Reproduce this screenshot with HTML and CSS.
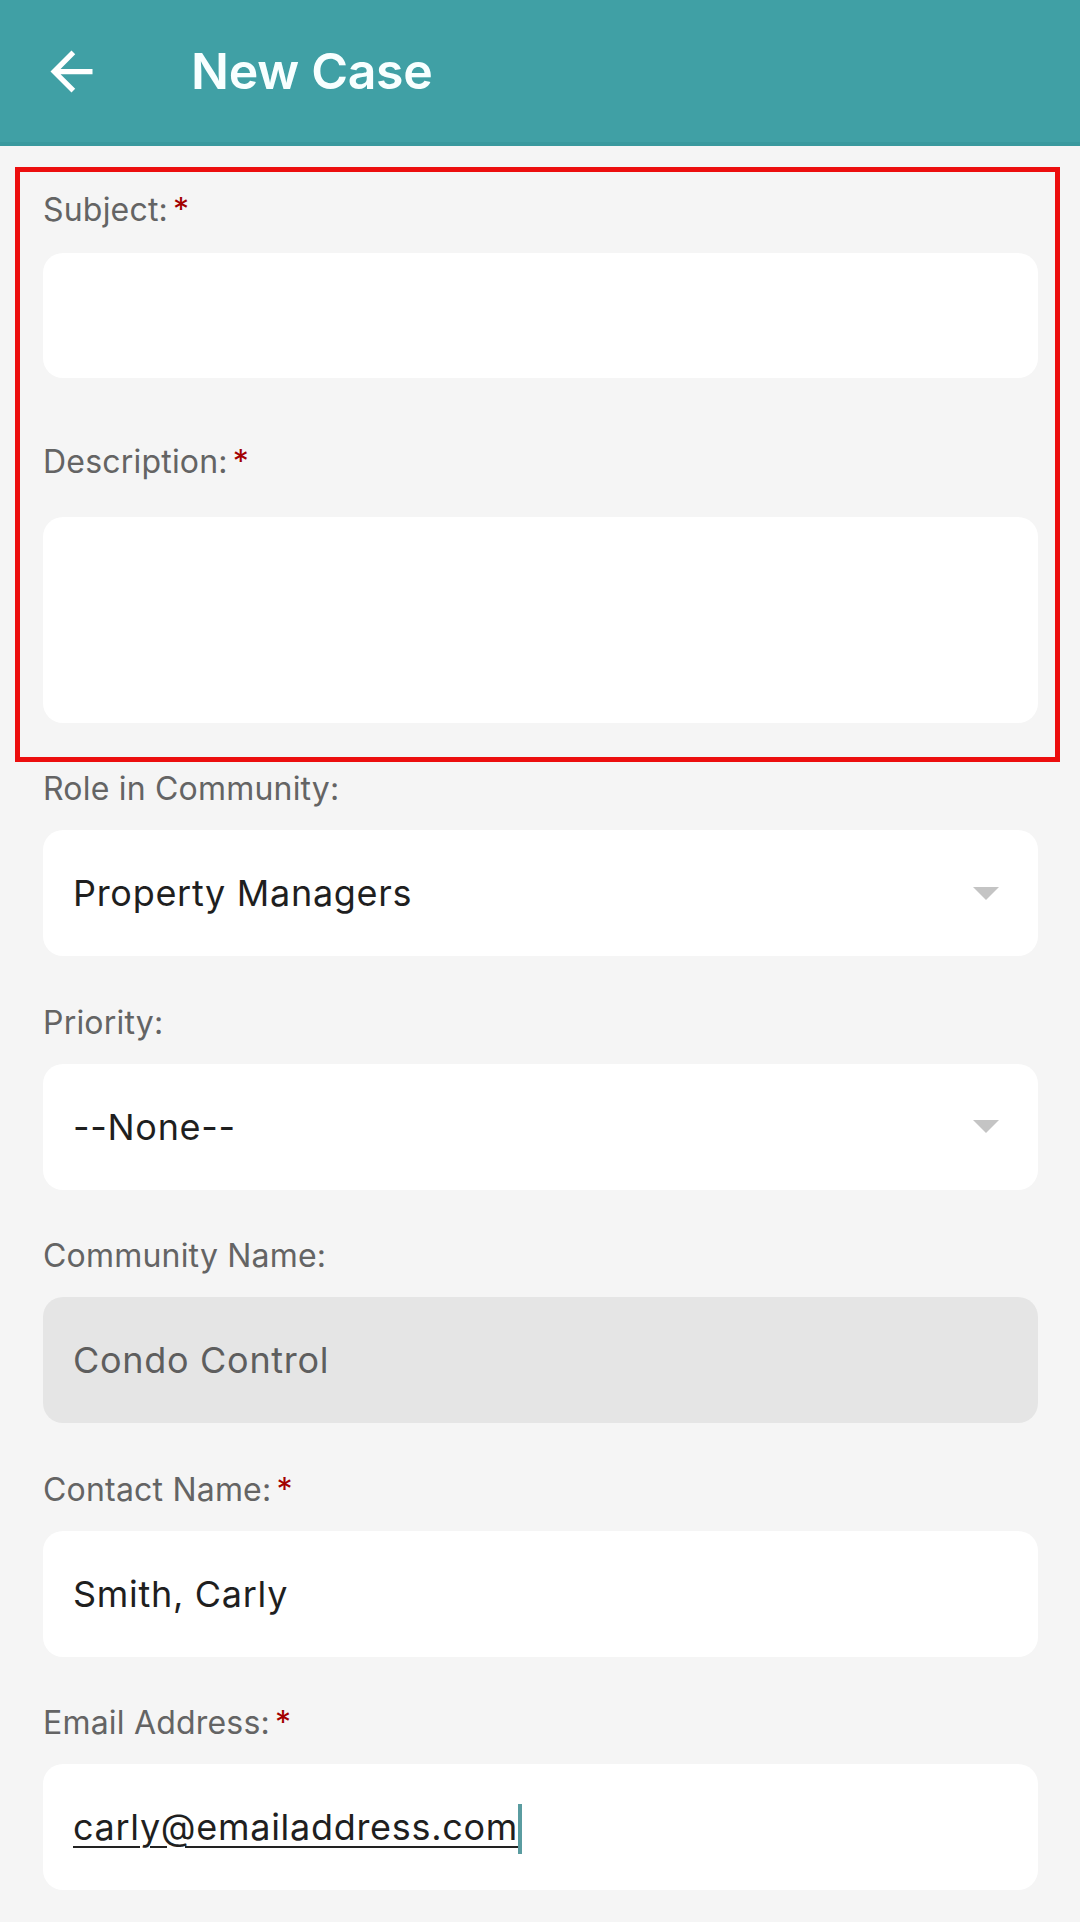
FILE: index.html
```html
<!DOCTYPE html>
<html lang="en">
<head>
<meta charset="utf-8">
<title>New Case</title>
<link rel="stylesheet" href="styles.css">
</head>
<body>
<header class="appbar">
  <button class="back" aria-label="Back">
    <svg viewBox="0 0 24 24" width="63" height="63"><path fill="currentColor" d="M20 11H7.83l5.59-5.59L12 4l-8 8 8 8 1.41-1.41L7.83 13H20v-2z"/></svg>
  </button>
  <h1 class="title">New Case</h1>
</header>
<main class="form">
  <section class="highlight">
    <div class="field field-first">
      <label class="label">Subject:<span class="req">*</span></label>
      <div class="control control-subject"></div>
    </div>
    <div class="field field-desc">
      <label class="label">Description:<span class="req">*</span></label>
      <div class="control control-area"></div>
    </div>
  </section>
  <div class="field field-role">
    <label class="label">Role in Community:</label>
    <div class="control select"><span class="value">Property Managers</span><span class="caret"></span></div>
  </div>
  <div class="field">
    <label class="label">Priority:</label>
    <div class="control select"><span class="value">--None--</span><span class="caret"></span></div>
  </div>
  <div class="field">
    <label class="label">Community Name:</label>
    <div class="control disabled"><span class="value">Condo Control</span></div>
  </div>
  <div class="field">
    <label class="label">Contact Name:<span class="req">*</span></label>
    <div class="control"><span class="value">Smith, Carly</span></div>
  </div>
  <div class="field">
    <label class="label">Email Address:<span class="req">*</span></label>
    <div class="control"><span class="value email">carly@emailaddress.com</span><span class="cursor"></span></div>
  </div>
</main>
</body>
</html>
```
FILE: styles.css
```css
* { box-sizing: border-box; }
html, body { margin: 0; padding: 0; }
body {
  background: #f5f5f5;
  font-family: Inter, "Noto Sans", "Liberation Sans", sans-serif;
  width: 1080px;
  height: 1922px;
  overflow: hidden;
}
.appbar {
  height: 146px;
  background: #40a0a5;
  border-bottom: 4px solid #3a999e;
  display: flex;
  align-items: center;
}
.back {
  margin-left: 40px;
  width: 63px;
  height: 63px;
  padding: 0;
  border: 0;
  background: none;
  color: #ffffff;
  display: flex;
}
.title {
  margin: 0 0 0 88px;
  color: #f8ffff;
  font-size: 50px;
  font-weight: 600;
  line-height: 1;
  letter-spacing: -0.3px;
}
.form {
  padding: 21px 42px 0 43px;
}
.highlight {
  margin: 0 -22px 0 -28px;
  border: 5px solid #ec0e0e;
  padding: 18px 17px 34px 23px;
}
.field { margin-bottom: 46.5px; }
.highlight .field { margin-bottom: 0; }
.field-desc { margin-top: 64px; }
.field-role { margin-top: 7px; }
.label {
  display: block;
  font-size: 32px;
  line-height: 40px;
  color: #646464;
  letter-spacing: 0.2px;
}
.req {
  color: #a30000;
  margin-left: 5px;
}
.control {
  margin-top: 21px;
  height: 126px;
  border-radius: 20px;
  background: #ffffff;
  display: flex;
  align-items: center;
  padding: 0 39px 0 30px;
}
.control-subject { margin-top: 23px; height: 125px; }
.control-area { margin-top: 35px; height: 206px; }
.value {
  font-size: 36px;
  color: #1f1f1f;
  flex: 0 0 auto;
  letter-spacing: 0.7px;
}
.select { justify-content: space-between; }
.caret {
  width: 0;
  height: 0;
  border-left: 13px solid transparent;
  border-right: 13px solid transparent;
  border-top: 13px solid #c4c4c4;
}
.disabled { background: #e5e5e5; }
.disabled .value { color: #5e5e5e; }
.email {
  text-decoration: underline;
  text-decoration-thickness: 2px;
  text-underline-offset: 6px;
  text-decoration-color: #222222;
}
.cursor {
  width: 4px;
  height: 50px;
  background: #5a9ca0;
  margin-left: 0;
  margin-top: 4px;
}
```
